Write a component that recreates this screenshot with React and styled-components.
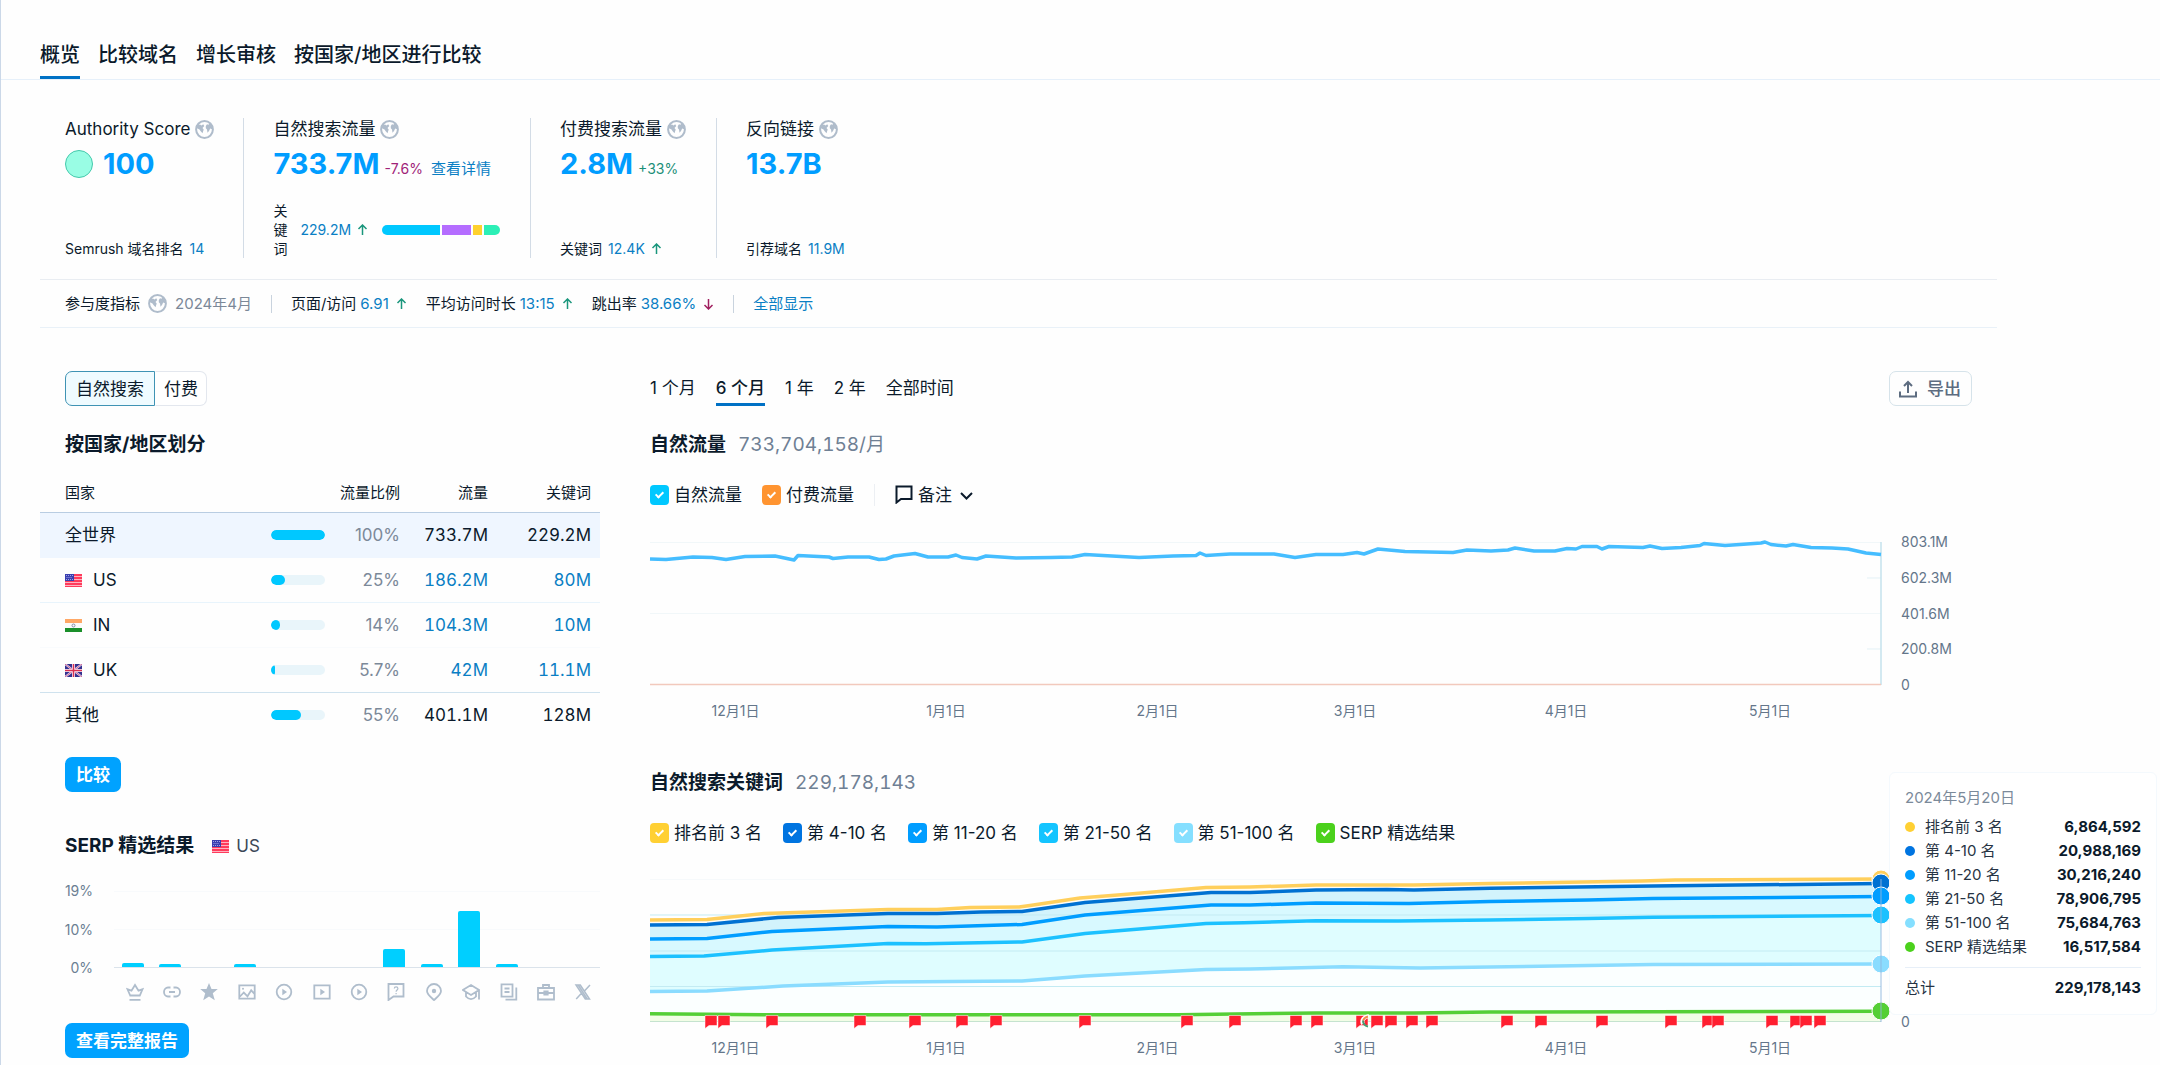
import React, { useState } from 'react'
import styled, { createGlobalStyle } from 'styled-components'

const GlobalStyle = createGlobalStyle`
  *, *::before, *::after {
    box-sizing: border-box;
  }
  body {
    margin: 0;
    background: #fefefe;
    color: #0b1a2b;
    font-family: Inter, "Noto Sans CJK SC", sans-serif;
    font-size: 17px;
    line-height: 24px;
  }
  button, input {
    font: inherit;
    color: inherit;
    margin: 0;
  }
  button {
    padding: 0;
    border: 0;
    background: none;
    cursor: pointer;
  }
  a {
    color: #0a7fc4;
    text-decoration: none;
  }
  h2 {
    margin: 0;
    font-size: 19px;
    font-weight: 700;
    line-height: 24px;
  }
  svg {
    display: block;
    flex: none;
  }
`

const Page = styled.div`
  min-height: 100vh;
  border-left: 1px solid #cbd8e8;
`
const MainNav = styled.nav`
  display: flex;
  gap: 18px;
  padding: 43px 39px 0;
  border-bottom: 1px solid #e6f0fa;
`
const MainTab = styled.a`
  padding-bottom: 9px;
  border-bottom: 3px solid ${({ $active }) => ($active ? '#0071c5' : 'transparent')};
  color: #0b1a2b;
  font-size: 20px;
  font-weight: 500;
`
const Panel = styled.main`
  margin: 0 163px 0 39px;
`

/* summary */
const Summary = styled.section`
  display: flex;
  padding: 38px 0 21px 25px;
`
const Card = styled.div`
  display: flex;
  flex-direction: column;
  min-height: 140px;
  padding: 0 30px 0 29px;
  border-left: 1px solid #d3dce6;
  &:first-child {
    padding-left: 0;
    padding-right: 29px;
    border-left: 0;
  }
`
const CardLabel = styled.div`
  display: flex;
  align-items: center;
  gap: 5px;
  line-height: 22px;
`
const CardValue = styled.div`
  display: flex;
  align-items: baseline;
  gap: 5px;
  margin-top: 6px;
  line-height: 36px;
  font-size: 15px;
`
const BigLink = styled.a`
  color: #009dff;
  font-size: 29px;
  font-weight: 700;
`
const ScoreDot = styled.i`
  align-self: center;
  width: 28px;
  height: 28px;
  margin-right: 5px;
  border: 1px solid #45c9ac;
  border-radius: 50%;
  background: #99fde4;
`
const Change = styled.span`
  color: ${({ $down }) => ($down ? '#a02278' : '#1c8f78')};
  font-size: 14px;
`
const DetailLink = styled.a`
  margin-left: 3px;
`
const CardFoot = styled.div`
  display: flex;
  align-items: center;
  gap: 6px;
  margin-top: auto;
  font-size: 14px;
  line-height: 19px;
`
const VerticalWord = styled.span`
  width: 15px;
  margin-right: 6px;
`
const Share = styled.div`
  display: flex;
  gap: 2px;
  width: 118px;
  height: 10px;
  margin-left: 8px;
  border-radius: 5px;
  overflow: hidden;
`
const SharePart = styled.i`
  flex: ${({ $size }) => $size};
  background: ${({ $color }) => $color};
`

/* engagement strip */
const Strip = styled.section`
  display: flex;
  align-items: center;
  height: 49px;
  padding-left: 25px;
  gap: 19px;
  border-top: 1px solid #e9edf2;
  border-bottom: 1px solid #e9f1f8;
  font-size: 15px;
`
const StripItem = styled.div`
  display: flex;
  align-items: center;
  gap: ${({ $gap }) => $gap || 4}px;
  color: ${({ $muted }) => ($muted ? '#7b8898' : 'inherit')};
  > a + svg {
    margin-left: 3px;
  }
`
const StripLine = styled.i`
  width: 1px;
  height: 18px;
  background: #c9d3de;
`

const Content = styled.div`
  display: grid;
  grid-template-columns: 560px 1fr;
  column-gap: 50px;
  padding-top: 43px;
`
const Side = styled.section`
  min-width: 0;
`
const Inset = styled.div`
  padding-left: 25px;
`
const Toggle = styled.div`
  display: flex;
  padding-bottom: 27px;
`
const ToggleButton = styled.button`
  height: 35px;
  padding: 0 ${({ $on }) => ($on ? 10 : 8)}px;
  border: 1px solid ${({ $on }) => ($on ? '#3f93b4' : '#e3e7ee')};
  border-left-color: ${({ $on }) => ($on ? '#3f93b4' : 'transparent')};
  border-radius: ${({ $on }) => ($on ? '7px 0 0 7px' : '0 7px 7px 0')};
  background: ${({ $on }) => ($on ? '#effbff' : '#fff')};
`
const Table = styled.table`
  width: 100%;
  margin: 16px 0 19px;
  border-collapse: separate;
  border-spacing: 0;
  table-layout: fixed;
  font-variant-numeric: tabular-nums;
`
const Th = styled.th`
  height: 40px;
  padding: 0 9px 0 0;
  border-bottom: 1px solid #b9cde2;
  font-size: 15px;
  font-weight: 400;
  text-align: right;
  &:first-child {
    width: 231px;
    padding-left: 25px;
    text-align: left;
  }
  &:nth-child(2) {
    width: 138px;
  }
  &:nth-child(3) {
    width: 88px;
  }
`
const Tr = styled.tr`
  background: ${({ $selected }) => ($selected ? '#eff6ff' : 'transparent')};
  td {
    border-bottom: 1px solid ${({ $line }) => $line};
  }
`
const Td = styled.td`
  height: 45px;
  padding: 0 9px 0 0;
  text-align: right;
  &:first-child {
    padding-left: 25px;
    text-align: left;
  }
`
const Country = styled.span`
  display: flex;
  align-items: center;
  gap: 11px;
`
const Ratio = styled.span`
  display: flex;
  align-items: center;
  justify-content: space-between;
  color: #7c8999;
  font-variant-numeric: normal;
`
const Track = styled.span`
  width: 54px;
  height: 10px;
  border-radius: 5px;
  background: #e9f5fa;
  overflow: hidden;
`
const Fill = styled.span`
  display: block;
  height: 100%;
  border-radius: 5px;
  background: #00c8ff;
`
const PrimaryButton = styled.button`
  height: 35px;
  padding: 0 11px;
  border-radius: 7px;
  background: #00a2ff;
  color: #fff;
  font-weight: 700;
`
const SerpHead = styled.div`
  display: flex;
  align-items: center;
  gap: 18px;
  padding-top: 42px;
`
const SerpCountry = styled.span`
  display: flex;
  align-items: center;
  gap: 7px;
  color: #3b4857;
`
const SerpChart = styled.div`
  display: grid;
  grid-template-columns: 28px 1fr;
  column-gap: 21px;
  margin: 33px 0 22px;
`
const SerpScale = styled.div`
  display: flex;
  flex-direction: column;
  justify-content: space-between;
  align-items: flex-end;
  margin: -10px 0;
  color: #6b7f93;
  font-size: 14px;
  line-height: 20px;
`
const SerpPlot = styled.div`
  display: flex;
  height: 77px;
  border-bottom: 1px solid #dbe3eb;
  background: linear-gradient(#f8fafc, #f8fafc) 0 0 / 100% 1px no-repeat,
    linear-gradient(#f8fafc, #f8fafc) 0 50% / 100% 1px no-repeat;
`
const SerpSlot = styled.div`
  flex: 1;
  display: flex;
  align-items: flex-end;
  justify-content: center;
`
const SerpBar = styled.i`
  width: 22px;
  border-radius: 2px 2px 0 0;
  background: #00cfff;
`
const SerpIcons = styled.div`
  grid-column: 2;
  display: flex;
  margin: 15px -2px 0 2px;
  color: #afbdcc;
  svg {
    margin: 0 auto;
  }
`
const IconSlot = styled.span`
  flex: 1;
`

/* right side */
const Toolbar = styled.div`
  display: flex;
  justify-content: space-between;
  height: 35px;
  margin: 0 25px 27px 0;
`
const Ranges = styled.div`
  display: flex;
  gap: 20px;
`
const RangeTab = styled.button`
  padding-top: 2px;
  border-bottom: 3px solid ${({ $active }) => ($active ? '#0071c5' : 'transparent')};
  font-weight: ${({ $active }) => ($active ? 500 : 400)};
`
const ExportButton = styled.button`
  display: flex;
  align-items: center;
  gap: 10px;
  padding: 0 10px 0 9px;
  border: 1px solid #d6e3ea;
  border-radius: 7px;
  color: #5d6c80;
  font-weight: 500;
`
const ChartHead = styled.div`
  display: flex;
  gap: 12px;
`
const Total = styled.span`
  color: #6f8094;
  font-size: 19px;
  font-variant-numeric: tabular-nums;
`
const Legend = styled.div`
  display: flex;
  align-items: center;
  height: 21px;
  gap: ${({ $gap }) => $gap}px;
  margin: 27px 0 ${({ $space }) => $space}px;
`
const LegendItem = styled.label`
  display: flex;
  align-items: center;
  gap: 5px;
  cursor: pointer;
`
const Check = styled.input`
  appearance: none;
  display: flex;
  justify-content: center;
  width: 19px;
  height: 20px;
  border-radius: 4px;
  background: ${({ $color }) => $color};
  &:checked::after {
    content: '';
    width: 5px;
    height: 8px;
    margin-top: 5px;
    border: solid #fff;
    border-width: 0 2px 2px 0;
    transform: rotate(45deg);
  }
`
const LegendLine = styled.i`
  width: 1px;
  height: 22px;
  background: #eceff3;
`
const NotesButton = styled.button`
  display: flex;
  align-items: center;
  gap: 5px;
`
const ChartGrid = styled.div`
  position: relative;
  display: grid;
  grid-template-columns: 1fr 96px;
  column-gap: 20px;
`
const Plot = styled.svg`
  width: 100%;
  height: 143px;
  overflow: visible;
`
const Scale = styled.div`
  display: flex;
  flex-direction: column;
  justify-content: ${({ $end }) => ($end ? 'flex-end' : 'space-between')};
  height: 163px;
  margin: -10px 0;
  color: #64768a;
  font-size: 14px;
  line-height: 20px;
`
const Dates = styled.div`
  display: grid;
  grid-template-columns: 171fr 250fr 173fr 222fr 200fr 208fr 7fr;
  margin-top: 16px;
  color: #64768a;
  font-size: 14px;
  line-height: 20px;
  text-align: center;
`
const SecondChart = styled.section`
  padding-top: 50px;
`
const Tooltip = styled.aside`
  position: absolute;
  top: -107px;
  left: calc(100% - 108px);
  width: 268px;
  padding: 14px 15px;
  border: 1px solid #f4f9fd;
  border-radius: 6px;
  background: #fff;
  font-size: 15px;
`
const TipDate = styled.div`
  margin-bottom: 6px;
  color: #7b8a9a;
  line-height: 22px;
`
const TipRow = styled.div`
  display: flex;
  align-items: center;
  gap: 10px;
  color: #273444;
`
const TipDot = styled.i`
  width: 10px;
  height: 10px;
  border-radius: 50%;
  background: ${({ $color }) => $color};
`
const TipValue = styled.strong`
  margin-left: auto;
  color: #0b1a2b;
  font-weight: 700;
`
const TipTotal = styled(TipRow)`
  margin-top: 8px;
  padding-top: 8px;
  border-top: 1px solid #e7eff8;
`

const RANKS = [
  { name: '排名前 3 名', value: '6,864,592', color: '#ffd033' },
  { name: '第 4-10 名', value: '20,988,169', color: '#0074e0' },
  { name: '第 11-20 名', value: '30,216,240', color: '#009dff' },
  { name: '第 21-50 名', value: '78,906,795', color: '#14c4ff' },
  { name: '第 51-100 名', value: '75,684,763', color: '#85dfff' },
  { name: 'SERP 精选结果', value: '16,517,584', color: '#4bd11c' },
]

const COUNTRIES = [
  { name: '全世界', share: '100%', width: 100, traffic: '733.7M', keywords: '229.2M', line: '#eff6ff', selected: true },
  { name: 'US', flag: 'us', share: '25%', width: 25, traffic: '186.2M', keywords: '80M', line: '#e8f4fc' },
  { name: 'IN', flag: 'in', share: '14%', width: 16, traffic: '104.3M', keywords: '10M', line: '#f9fbfd' },
  { name: 'UK', flag: 'uk', share: '5.7%', width: 7, traffic: '42M', keywords: '11.1M', line: '#cfe2ee' },
  { name: '其他', share: '55%', width: 55, traffic: '401.1M', keywords: '128M', line: 'transparent' },
]

const RANGES = ['1 个月', '6 个月', '1 年', '2 年', '全部时间']
const DATES = ['12月1日', '1月1日', '2月1日', '3月1日', '4月1日', '5月1日']
const SERP_BARS = [4, 3, 0, 3, 0, 0, 0, 18, 3, 56, 3, 0, 0]

const TRAFFIC =
  '0,17 16,17.5 43,15 62,15.5 76,17.5 95,14.5 125,14 144,18 148,13.5 179,15 183,16.5 198,15 219,15 229,17.5 236,17 244,14 265,11.5 278,15 298,15 306,13 312,15.5 327,17 336,14 366,16 401,15.5 422,15 435,12.5 489,15.5 523,14 546,13.5 550,11 556,13.5 580,12 624,12 645,15.5 666,12.5 693,12.5 707,10.5 714,12 728,7 755,9.5 803,10.5 817,8 841,9 858,8 865,6 884,9 905,9 917,6.5 926,7 932,4.5 947,4.5 952,7 959,4.5 993,5.5 1000,4 1012,6.5 1031,5.5 1050,3.5 1054,1.5 1075,3.5 1090,2.5 1111,1 1115,0 1121,2.5 1136,4 1143,2.5 1161,5.5 1182,6 1198,7 1216,11 1231,12.5'

// stacked from top to bottom, fill is the band under each line
const LAYERS = [
  { color: '#ffcf5c', fill: '#fffdf5', end: 0, points: '0,41 57,40.5 114,34.5 177,32.5 238,30.5 287,30.5 320,28.5 369,28 380,26.5 430,19 474,15.5 556,8.5 600,8 666,6 764,6 840,4.5 992,2 1025,1 1231,0' },
  { color: '#0071d2', fill: '#d2f3fc', end: 4, points: '0,46 57,45.5 128,38.5 238,34.5 287,34.5 331,33 372,32.5 435,23.5 561,13.5 600,13.5 666,11 737,10.5 764,11 840,9.3 947,7.7 1003,7 1231,4.5' },
  { color: '#009dff', fill: '#d8f9ff', end: 17, points: '0,60 57,59.5 122,52.5 238,47.5 287,48 372,45.5 435,36 561,26 600,26 666,24 759,24.5 840,22.5 938,21 1003,19.5 1231,17.5' },
  { color: '#1cc1ff', fill: '#dffdff', end: 36, points: '0,77.5 54,77 122,71 238,64.5 276,64.8 372,63 435,54.5 556,44.5 594,43.7 666,41.7 748,42 840,41 938,39.5 1003,38.3 1231,36.5' },
  { color: '#8adcff', fill: '#fbffff', end: 85, points: '0,112.5 57,112 133,107 238,103 372,102 435,97 556,90.5 600,90 693,87.7 770,89 840,88 1003,85.5 1231,85' },
  { color: '#55cf36', fill: '#f2fde6', end: 132, points: '0,134.7 117,135.7 528,135.7 666,134 764,134 840,133 1003,132.7 1231,132.3' },
]
const NOTES = [61, 74, 122, 210, 265, 312, 346, 435, 537, 585, 646, 667, 712, 727, 741, 762, 782, 857, 891, 952, 1021, 1058, 1068, 1122, 1146, 1156, 1170]

const Globe = () => (
  <svg width="19" height="19" viewBox="0 0 19 19" fill="#afbccb" aria-hidden="true">
    <circle cx="9.5" cy="9.5" r="8.4" fill="none" stroke="#afbccb" strokeWidth="2" />
    <path d="M1.500 5.500 5 4.500l1.500 1L8.200 4.200 9.300 6 7.500 8l1.200 1.500-1.200 3.800L5.500 11 4.500 9.500 1.500 8z" />
    <path d="M10.800 6 12 4.200l1.500.6 1-1.300 2.500 3 .5 3-2.300-1L14 11l-1.500 1.800L12 9.500l-1.200-1.200z" />
  </svg>
)

const Arrow = ({ down }) => (
  <svg width="11" height="12" viewBox="0 0 11 12" fill="none" stroke={down ? '#a01f5f' : '#1a967c'} strokeWidth="1.500" aria-hidden="true">
    {down ? <path d="M5.500 1v10M1.500 7l4 4 4-4" /> : <path d="M5.500 11V1M1.500 5l4-4 4 4" />}
  </svg>
)

const Flag = ({ code }) => (
  <svg width="17" height="13" viewBox="0 0 17 13" aria-label={code}>
    {code === 'us' && (
      <>
        <path fill="#ff3b5c" d="M0 0h17v13H0z" />
        <path stroke="#ffb3c0" d="M0 2.500h17M0 5.500h17M0 8.500h17M0 11.500h17" />
        <path fill="#3a3fb0" d="M0 0h9v7H0z" />
        <path stroke="#9fa2e6" strokeWidth="1" strokeDasharray="1 1" d="M1 1.500h7M1.500 3.500h6M1 5.500h7" />
      </>
    )}
    {code === 'in' && (
      <>
        <path fill="#ffa866" d="M0 0h17v4H0z" />
        <path fill="#fbfbfb" d="M0 4h17v5H0z" />
        <path fill="#1a8f2a" d="M0 9h17v4H0z" />
        <circle cx="8.500" cy="6.500" r="1.500" fill="none" stroke="#6b7798" strokeWidth=".8" />
      </>
    )}
    {code === 'uk' && (
      <>
        <path fill="#33308f" d="M0 0h17v13H0z" />
        <path stroke="#e8e4f5" strokeWidth="2" d="m0 0 17 13M17 0 0 13" />
        <path stroke="#c8407a" strokeWidth=".8" d="m0 0 17 13M17 0 0 13" />
        <path stroke="#f3effa" strokeWidth="3" d="M8.500 0v13M0 6.500h17" />
        <path stroke="#d92f50" strokeWidth="1.500" d="M8.500 0v13M0 6.500h17" />
      </>
    )}
  </svg>
)

const play = <path d="M7.300 5.800v6.400l4.700-3.200z" fill="currentColor" stroke="none" />
const SERP_ICONS = [
  <path d="M4.200 12.500 1.500 6.300l4 1.400L9 2l3.500 5.700 4-1.400-2.700 6.200zM3.500 16.800h11" />,
  <path d="M7.500 4.500H5a4 4.500 0 0 0 0 9h2.500M10.500 4.500H13a4 4.500 0 0 1 0 9h-2.500M6 9h6" />,
  <path d="m9 0 2.500 6h6.300l-5 4.200 2 7L9 13.400l-5.800 3.800 2-7-5-4.200h6.300z" fill="currentColor" stroke="none" />,
  <>
    <path d="M1.300 2.300h15.400v13.400H1.300zM2 13.500l3.800-4 3.700 3.800 3.700-6 3.300 3.500" />
    <circle cx="5" cy="5.800" r="1" fill="currentColor" stroke="none" />
  </>,
  <>
    <circle cx="9" cy="9" r="7.300" />
    {play}
  </>,
  <>
    <path d="M1.300 2.300h15.400v13.400H1.300z" />
    {play}
  </>,
  <>
    <circle cx="9" cy="9" r="7.300" />
    {play}
  </>,
  <>
    <path d="M1.500 1h15v12.500h-10l-5 3.500z" />
    <path strokeWidth="1.200" d="M7.300 5.500c0-2.200 3.600-2.200 3.600 0 0 1.500-1.800 1.500-1.800 3.200M9.100 10v1.200" />
  </>,
  <>
    <path d="M9 17c-3-2.800-7-5.500-7-9a7 7 0 0 1 14 0c0 3.500-4 6.200-7 9z" />
    <circle cx="9" cy="8" r="2.200" fill="currentColor" stroke="none" />
  </>,
  <path d="M.8 7 9 2l8 5-8 5zM4 9.300v4.200c3 3.400 7 3.400 10 0V9.300M17 7v9.500" />,
  <path d="M1.500 1.300h11v12.400h-11zM4.500 5.500h5M4.500 9h5M16.300 4.500v12.200H5.500" />,
  <path d="M1 5h16v11.500H1zM6 5V2h6v3M1 10h16M7.300 8.500h3.400v3H7.300z" />,
  <path strokeWidth="1.500" d="M2 2h4.300l9.200 14h-4.200zM4.200 2l9 14M16 2l-5.800 6.300M2.200 16l5.500-6" />,
]

const Metric = ({ label, value, children }) => (
  <StripItem>
    {label}
    <a href="#metric">{value}</a>
    {children}
  </StripItem>
)

const LegendCheck = ({ name, color }) => (
  <LegendItem>
    <Check type="checkbox" defaultChecked $color={color} />
    {name}
  </LegendItem>
)

const DateAxis = () => (
  <Dates>
    {DATES.map((date) => (
      <span key={date}>{date}</span>
    ))}
  </Dates>
)

const CountryTable = () => (
  <Table>
    <thead>
      <tr>
        <Th>国家</Th>
        <Th>流量比例</Th>
        <Th>流量</Th>
        <Th>关键词</Th>
      </tr>
    </thead>
    <tbody>
      {COUNTRIES.map(({ name, flag, share, width, traffic, keywords, line, selected }) => (
        <Tr key={name} $line={line} $selected={selected}>
          <Td>
            <Country>
              {flag && <Flag code={flag} />}
              {name}
            </Country>
          </Td>
          <Td>
            <Ratio>
              <Track>
                <Fill style={{ width: `${width}%` }} />
              </Track>
              {share}
            </Ratio>
          </Td>
          <Td>{flag ? <a href="#traffic">{traffic}</a> : traffic}</Td>
          <Td>{flag ? <a href="#keywords">{keywords}</a> : keywords}</Td>
        </Tr>
      ))}
    </tbody>
  </Table>
)

const TrafficChart = () => (
  <ChartGrid>
    <div>
      <Plot viewBox="0 0 1231 143" preserveAspectRatio="none" fill="none">
        <path d="M0 .5h1231M0 71.500h1231" stroke="#f1f7f9" />
        <path d="M1217 36h14M1217 107h14" stroke="#e3f1f6" />
        <path d="M1231 0v143" stroke="#c4e2ec" strokeWidth="1.500" />
        <path d="M0 142.500h1231" stroke="#f2c9bd" strokeWidth="1.500" />
        <polyline points={TRAFFIC} stroke="#45bdff" strokeWidth="3.500" strokeLinejoin="round" />
      </Plot>
      <DateAxis />
    </div>
    <Scale>
      {['803.1M', '602.3M', '401.6M', '200.8M', '0'].map((mark) => (
        <span key={mark}>{mark}</span>
      ))}
    </Scale>
  </ChartGrid>
)

const KeywordChart = () => (
  <ChartGrid>
    <div>
      <Plot viewBox="0 0 1231 143" preserveAspectRatio="none" fill="none">
        <path d="M0 .5h1200" stroke="#f6f9fb" />
        {LAYERS.map(({ fill, points }) => (
          <polygon key={fill} points={`0,143 ${points} 1231,143`} fill={fill} />
        ))}
        <path d="M0 36h1231M0 72h1231M0 107.500h1231" stroke="#c3ebf3" />
        <path d="M0 142.500h1231" stroke="#c5e3cf" />
        {LAYERS.map(({ color, points }) => (
          <polyline key={color} points={points} stroke={color} strokeWidth="3.500" strokeLinejoin="round" />
        ))}
        {NOTES.map((x) => (
          <path key={x} d={`M${x - 6} 136.500h12v10h-8l-4 3z`} fill="#ff1f30" stroke="#fff" strokeWidth=".5" />
        ))}
        <path d="M719 137c-5 1-8 4-6 8" stroke="#fff" strokeWidth="4" />
        <path d="M718 137.500q-4 1-5 4" stroke="#f08a4a" strokeWidth="2" />
        <path d="M713 141.500q0 5 5 6" stroke="#4a9a72" strokeWidth="2" />
        {LAYERS.map(({ color, end }) => (
          <circle key={color} cx="1231" cy={end} r="9" fill={color} stroke="#fff" strokeWidth="1" />
        ))}
        <path d="M1231 0v143" stroke="#8fb6dc" strokeOpacity=".6" strokeWidth="1.500" />
      </Plot>
      <DateAxis />
    </div>
    <Scale $end>
      <span>0</span>
    </Scale>
    <Tooltip>
      <TipDate>2024年5月20日</TipDate>
      {RANKS.map(({ name, value, color }) => (
        <TipRow key={name}>
          <TipDot $color={color} />
          {name}
          <TipValue>{value}</TipValue>
        </TipRow>
      ))}
      <TipTotal>
        总计
        <TipValue>229,178,143</TipValue>
      </TipTotal>
    </Tooltip>
  </ChartGrid>
)

const App = () => {
  const [source, setSource] = useState('organic')
  const [range, setRange] = useState('6 个月')

  return (
    <Page>
      <GlobalStyle />
      <MainNav>
        <MainTab href="#overview" $active>概览</MainTab>
        <MainTab href="#compare">比较域名</MainTab>
        <MainTab href="#growth">增长审核</MainTab>
        <MainTab href="#countries">按国家/地区进行比较</MainTab>
      </MainNav>
      <Panel>
        <Summary>
          <Card>
            <CardLabel>Authority Score <Globe /></CardLabel>
            <CardValue>
              <ScoreDot />
              <BigLink href="#score">100</BigLink>
            </CardValue>
            <CardFoot>Semrush 域名排名 <a href="#rank">14</a></CardFoot>
          </Card>
          <Card>
            <CardLabel>自然搜索流量 <Globe /></CardLabel>
            <CardValue>
              <BigLink href="#organic">733.7M</BigLink>
              <Change $down>-7.6%</Change>
              <DetailLink href="#details">查看详情</DetailLink>
            </CardValue>
            <CardFoot>
              <VerticalWord>关键词</VerticalWord>
              <a href="#keywords">229.2M</a>
              <Arrow />
              <Share>
                <SharePart $size={58} $color="#00c8ff" />
                <SharePart $size={29} $color="#b56dff" />
                <SharePart $size={9} $color="#ffd12e" />
                <SharePart $size={16} $color="#2cefb6" />
              </Share>
            </CardFoot>
          </Card>
          <Card>
            <CardLabel>付费搜索流量 <Globe /></CardLabel>
            <CardValue>
              <BigLink href="#paid">2.8M</BigLink>
              <Change>+33%</Change>
            </CardValue>
            <CardFoot>关键词 <a href="#paid-keywords">12.4K</a> <Arrow /></CardFoot>
          </Card>
          <Card>
            <CardLabel>反向链接 <Globe /></CardLabel>
            <CardValue>
              <BigLink href="#backlinks">13.7B</BigLink>
            </CardValue>
            <CardFoot>引荐域名 <a href="#domains">11.9M</a></CardFoot>
          </Card>
        </Summary>

        <Strip>
          <StripItem $gap={8}>
            参与度指标 <Globe />
            <StripItem $muted>2024年4月</StripItem>
          </StripItem>
          <StripLine />
          <Metric label="页面/访问" value="6.91"><Arrow /></Metric>
          <Metric label="平均访问时长" value="13:15"><Arrow /></Metric>
          <Metric label="跳出率" value="38.66%"><Arrow down /></Metric>
          <StripLine />
          <a href="#all">全部显示</a>
        </Strip>

        <Content>
          <Side>
            <Inset>
              <Toggle>
                <ToggleButton type="button" $on={source === 'organic'} onClick={() => setSource('organic')}>自然搜索</ToggleButton>
                <ToggleButton type="button" $on={source === 'paid'} onClick={() => setSource('paid')}>付费</ToggleButton>
              </Toggle>
              <h2>按国家/地区划分</h2>
            </Inset>
            <CountryTable />
            <Inset>
              <PrimaryButton type="button">比较</PrimaryButton>
              <SerpHead>
                <h2>SERP 精选结果</h2>
                <SerpCountry><Flag code="us" /> US</SerpCountry>
              </SerpHead>
              <SerpChart>
                <SerpScale>
                  <span>19%</span>
                  <span>10%</span>
                  <span>0%</span>
                </SerpScale>
                <SerpPlot>
                  {SERP_BARS.map((height, i) => (
                    <SerpSlot key={i}>
                      <SerpBar style={{ height }} />
                    </SerpSlot>
                  ))}
                </SerpPlot>
                <SerpIcons>
                  {SERP_ICONS.map((icon, i) => (
                    <IconSlot key={i}>
                      <svg width="18" height="18" viewBox="0 0 18 18" fill="none" stroke="currentColor" strokeWidth="1.800">
                        {icon}
                      </svg>
                    </IconSlot>
                  ))}
                </SerpIcons>
              </SerpChart>
              <PrimaryButton type="button">查看完整报告</PrimaryButton>
            </Inset>
          </Side>

          <Side>
            <Toolbar>
              <Ranges>
                {RANGES.map((item) => (
                  <RangeTab key={item} type="button" $active={item === range} onClick={() => setRange(item)}>
                    {item}
                  </RangeTab>
                ))}
              </Ranges>
              <ExportButton type="button">
                <svg width="18" height="18" viewBox="0 0 18 18" fill="none" stroke="currentColor" strokeWidth="2">
                  <path d="M1 11.500v5h16v-5M9 13V2M5 6l4-4 4 4" />
                </svg>
                导出
              </ExportButton>
            </Toolbar>
            <ChartHead>
              <h2>自然流量</h2>
              <Total>733,704,158/月</Total>
            </ChartHead>
            <Legend $gap={20} $space={37}>
              <LegendCheck name="自然流量" color="#00c8ff" />
              <LegendCheck name="付费流量" color="#ff9430" />
              <LegendLine />
              <NotesButton type="button">
                <svg width="18" height="19" viewBox="0 0 18 19" fill="none" stroke="currentColor" strokeWidth="2">
                  <path d="M1.500 1.500h15v12.500H6l-4.500 3.500z" />
                </svg>
                备注
                <svg width="18" height="12" viewBox="0 0 18 12" fill="none" stroke="currentColor" strokeWidth="2">
                  <path d="m4 4 5.500 5.500L15 4" />
                </svg>
              </NotesButton>
            </Legend>
            <TrafficChart />
            <SecondChart>
              <ChartHead>
                <h2>自然搜索关键词</h2>
                <Total>229,178,143</Total>
              </ChartHead>
              <Legend $gap={21} $space={36}>
                {RANKS.map(({ name, color }) => (
                  <LegendCheck key={name} name={name} color={color} />
                ))}
              </Legend>
              <KeywordChart />
            </SecondChart>
          </Side>
        </Content>
      </Panel>
    </Page>
  )
}

export default App
